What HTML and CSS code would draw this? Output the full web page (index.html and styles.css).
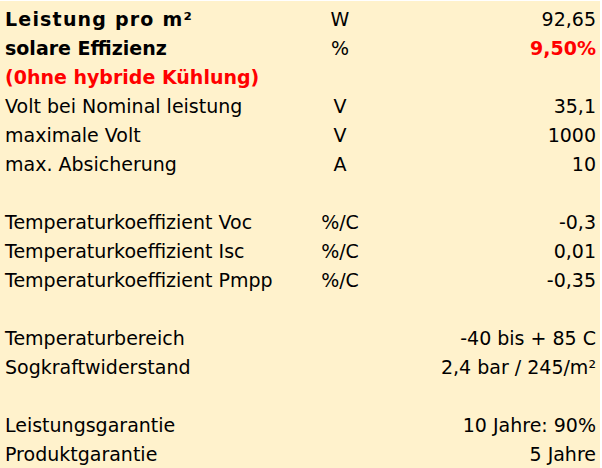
FILE: index.html
```html
<!DOCTYPE html>
<html lang="de">
<head>
<meta charset="utf-8">
<link rel="stylesheet" href="styles.css">
</head>
<body>
<div class="sheet">
  <div class="row"><span class="label bold wide">Leistung pro m²</span><span class="unit">W</span><span class="value">92,65</span></div>
  <div class="row"><span class="label bold">solare Effizienz</span><span class="unit">%</span><span class="value bold red">9,50%</span></div>
  <div class="row"><span class="label bold red">(0hne hybride Kühlung)</span><span class="unit"></span><span class="value"></span></div>
  <div class="row"><span class="label">Volt bei Nominal leistung</span><span class="unit">V</span><span class="value">35,1</span></div>
  <div class="row"><span class="label">maximale Volt</span><span class="unit">V</span><span class="value">1000</span></div>
  <div class="row"><span class="label">max. Absicherung</span><span class="unit">A</span><span class="value">10</span></div>
  <div class="row"><span class="label"></span><span class="unit"></span><span class="value"></span></div>
  <div class="row"><span class="label">Temperaturkoeffizient Voc</span><span class="unit">%/C</span><span class="value">-0,3</span></div>
  <div class="row"><span class="label">Temperaturkoeffizient Isc</span><span class="unit">%/C</span><span class="value">0,01</span></div>
  <div class="row"><span class="label">Temperaturkoeffizient Pmpp</span><span class="unit">%/C</span><span class="value">-0,35</span></div>
  <div class="row"><span class="label"></span><span class="unit"></span><span class="value"></span></div>
  <div class="row"><span class="label">Temperaturbereich</span><span class="unit"></span><span class="value">-40 bis + 85 C</span></div>
  <div class="row"><span class="label">Sogkraftwiderstand</span><span class="unit"></span><span class="value">2,4 bar / 245/m²</span></div>
  <div class="row"><span class="label"></span><span class="unit"></span><span class="value"></span></div>
  <div class="row"><span class="label">Leistungsgarantie</span><span class="unit"></span><span class="value">10 Jahre: 90%</span></div>
  <div class="row"><span class="label">Produktgarantie</span><span class="unit"></span><span class="value">5 Jahre</span></div>
</div>
</body>
</html>
```

FILE: styles.css
```css
html, body {
  margin: 0;
  padding: 0;
  background: #ffffff;
}
body {
  padding-top: 1px;
}
.sheet {
  width: 600px;
  height: 467px;
  background: #fff2cc;
  padding-top: 3px;
  box-sizing: border-box;
  font-family: "DejaVu Sans", Verdana, sans-serif;
  font-size: 19px;
  color: #000;
}
.row {
  display: grid;
  grid-template-columns: 285px 100px 1fr;
  height: 29px;
  align-items: center;
  padding: 0 4px 0 5px;
  white-space: nowrap;
}
.bold {
  font-weight: bold;
}
.wide {
  letter-spacing: 1.2px;
}
.unit {
  text-align: center;
}
.value {
  text-align: right;
}
.red {
  color: #ff0000;
}
```
